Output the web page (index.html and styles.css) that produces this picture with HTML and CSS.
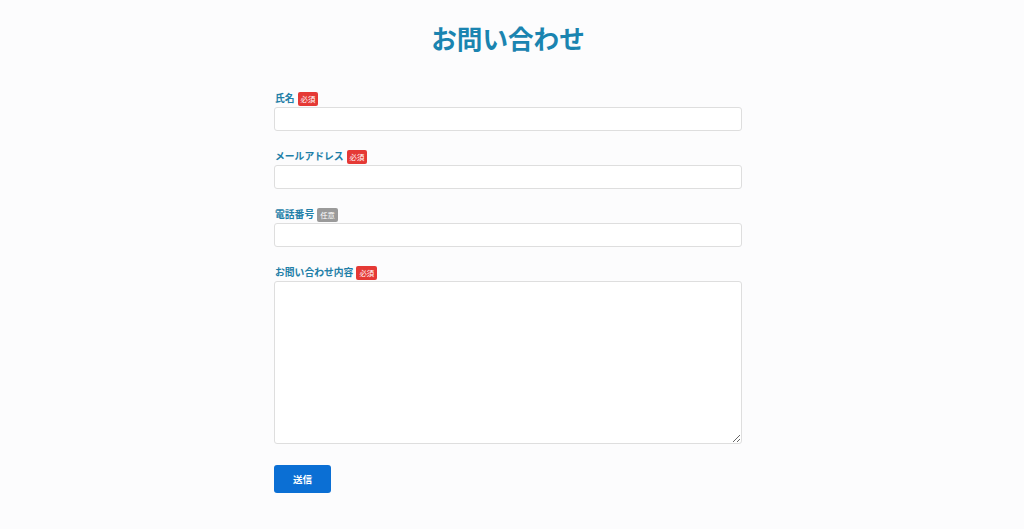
FILE: index.html
```html
<!DOCTYPE html>
<html lang="ja">
<head>
<meta charset="utf-8">
<title>お問い合わせ</title>
<link rel="stylesheet" href="styles.css">
</head>
<body>
<div class="page">
  <h1 class="title">お問い合わせ</h1>
  <form class="form">
    <div class="group">
      <div class="label-row"><label class="label" for="name">氏名</label><span class="badge req">必須</span></div>
      <input class="input" id="name" type="text">
    </div>
    <div class="group">
      <div class="label-row"><label class="label" for="email">メールアドレス</label><span class="badge req">必須</span></div>
      <input class="input" id="email" type="email">
    </div>
    <div class="group">
      <div class="label-row"><label class="label" for="tel">電話番号</label><span class="badge opt">任意</span></div>
      <input class="input" id="tel" type="tel">
    </div>
    <div class="group">
      <div class="label-row"><label class="label" for="msg">お問い合わせ内容</label><span class="badge req">必須</span></div>
      <textarea class="textarea" id="msg"></textarea>
    </div>
    <button class="submit" type="button">送信</button>
  </form>
</div>
</body>
</html>
```
FILE: styles.css
```css
html, body {
  margin: 0;
  padding: 0;
  background: #fcfcfd;
  font-family: "Noto Sans CJK JP", "Noto Sans", sans-serif;
}
.page {
  padding: 23px 8px 0 0;
}
.title {
  margin: 0;
  text-align: center;
  font-size: 25.6px;
  line-height: 1.2;
  font-weight: 700;
  color: #1a84b0;
}
.form {
  width: 468px;
  margin: 38px auto 0;
  display: flex;
  flex-direction: column;
}
.group {
  display: flex;
  flex-direction: column;
  margin-bottom: 19px;
}
.label-row {
  display: flex;
  align-items: center;
  gap: 3px;
  height: 14px;
  margin-bottom: 1px;
}
.label {
  font-size: 9.8px;
  font-weight: 700;
  color: #1f7fa8;
  line-height: 1;
  padding-left: 1px;
}
.badge {
  display: inline-flex;
  align-items: center;
  justify-content: center;
  height: 14px;
  padding: 0 3px;
  border-radius: 2px;
  font-size: 7.4px;
  color: #ffffff;
  line-height: 1;
}
.req { background: #e53935; }
.opt { background: #9a9a9a; }
.input {
  box-sizing: border-box;
  height: 24px;
  width: 100%;
  margin: 0;
  border: 1px solid #dedede;
  border-radius: 3px;
  background: #ffffff;
  font-family: inherit;
  font-size: 11px;
  padding: 0 8px;
}
.textarea {
  box-sizing: border-box;
  height: 163px;
  width: 100%;
  margin: 0;
  border: 1px solid #dedede;
  border-radius: 3px;
  background: #ffffff;
  font-family: inherit;
  font-size: 11px;
  padding: 6px 8px;
  resize: vertical;
}
.submit {
  align-self: flex-start;
  margin-top: 2px;
  width: 57px;
  height: 28px;
  border: none;
  border-radius: 3px;
  background: #0b6fd4;
  color: #ffffff;
  font-family: inherit;
  font-size: 9.6px;
  font-weight: 700;
  cursor: pointer;
}
```
